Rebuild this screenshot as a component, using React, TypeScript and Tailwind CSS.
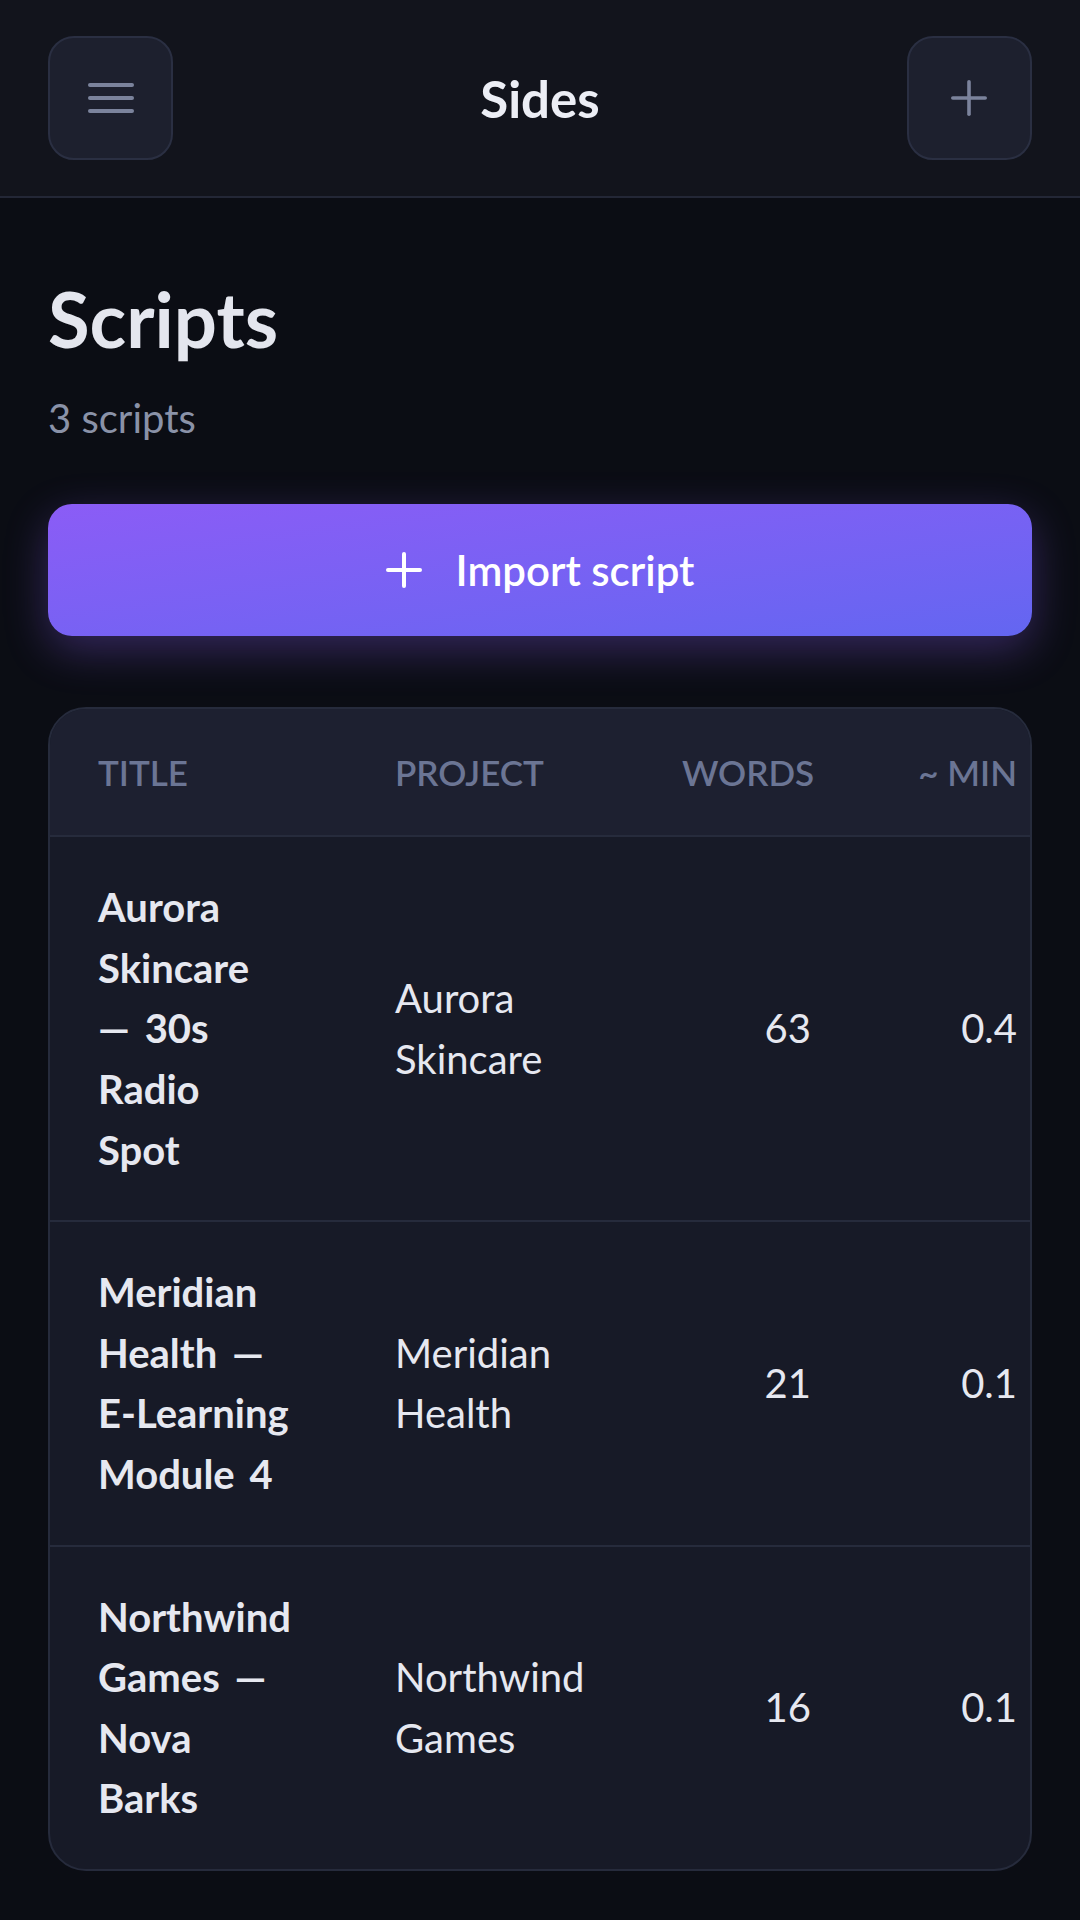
type Script = {
  id: string;
  title: string;
  project: string;
  words: number;
  minutes: number;
};

const scripts: Script[] = [
  { id: 'aurora', title: 'Aurora Skincare — 30s Radio Spot', project: 'Aurora Skincare', words: 63, minutes: 0.4 },
  { id: 'meridian', title: 'Meridian Health — E-Learning Module 4', project: 'Meridian Health', words: 21, minutes: 0.1 },
  { id: 'northwind', title: 'Northwind Games — Nova Barks', project: 'Northwind Games', words: 16, minutes: 0.1 },
];

function MenuGlyph() {
  return (
    <svg width="46" height="32" viewBox="0 0 46 32" fill="none" stroke="#7b839c" strokeWidth="4" strokeLinecap="round">
      <line x1="2" y1="3" x2="44" y2="3" />
      <line x1="2" y1="16" x2="44" y2="16" />
      <line x1="2" y1="29" x2="44" y2="29" />
    </svg>
  );
}

function PlusGlyph({ size, stroke, color }: { size: number; stroke: number; color: string }) {
  const h = stroke / 2;
  return (
    <svg width={size} height={size} viewBox={`0 0 ${size} ${size}`} fill="none" stroke={color} strokeWidth={stroke} strokeLinecap="round">
      <line x1={size / 2} y1={h} x2={size / 2} y2={size - h} />
      <line x1={h} y1={size / 2} x2={size - h} y2={size / 2} />
    </svg>
  );
}

export default function App() {
  return (
    <div className="min-h-screen w-full bg-[#0b0d14] font-['Lato',sans-serif] text-[#e6e8f0]">
      {/* Top bar */}
      <header className="flex items-center justify-between px-12 py-9 bg-[#12141c] border-b-2 border-[#232736]">
        <button className="flex items-center justify-center w-[125px] h-[124px] rounded-[26px] bg-[#1d202e] border-2 border-[#2a2f42]">
          <MenuGlyph />
        </button>
        <h1 className="text-[51px] font-bold leading-none text-[#eceef5]">Sides</h1>
        <button className="flex items-center justify-center w-[125px] h-[124px] rounded-[26px] bg-[#1d202e] border-2 border-[#2a2f42]">
          <PlusGlyph size={36} stroke={3.6} color="#7b839c" />
        </button>
      </header>

      <main className="px-12 pt-[75px] pb-12">
        <h2 className="text-[76px] font-bold leading-[1.2] text-[#e4e6ee]">Scripts</h2>
        <p className="mt-6 text-[40px] leading-[1.5] text-[#8a92a8]">3 scripts</p>

        <button className="mt-14 flex w-full h-[132px] items-center justify-center gap-[34px] rounded-[24px] bg-linear-to-br from-[#8b5cf6] to-[#6366f1] text-white shadow-[0_14px_44px_rgba(139,92,246,0.32)]">
          <PlusGlyph size={36} stroke={4} color="#ffffff" />
          <span className="text-[42px] font-semibold leading-none">Import script</span>
        </button>

        {/* Scripts table */}
        <div className="mt-[71px] overflow-hidden rounded-[38px] border-2 border-[#262b3c] bg-[#171a27]">
          <table className="table-fixed w-[1015px]">
            <colgroup>
              <col className="w-[297px]" />
              <col className="w-[287px]" />
              <col className="w-[225px]" />
              <col className="w-[206px]" />
            </colgroup>
            <thead className="bg-[#1d2030]">
              <tr className="border-b-2 border-[#262b3c] text-[35px] leading-[54px] uppercase text-[#6b7594]">
                <th className="pl-12 pr-[54px] py-9 text-left font-semibold">Title</th>
                <th className="px-12 py-9 text-left font-semibold">Project</th>
                <th className="px-12 py-9 text-right font-semibold">Words</th>
                <th className="px-12 py-9 text-right font-semibold">~ Min</th>
              </tr>
            </thead>
            <tbody>
              {scripts.map((s, i) => (
                <tr
                  key={s.id}
                  className={`text-[40px] leading-[60.6px] text-[#e6e8f0] ${i < scripts.length - 1 ? 'border-b-2 border-[#262b3c]' : ''}`}
                >
                  <td className="pl-12 pr-[54px] py-10 font-bold [word-spacing:5px]">{s.title}</td>
                  <td className="px-12 py-10">{s.project}</td>
                  <td className="px-12 py-10 text-right">{s.words}</td>
                  <td className="px-12 py-10 text-right">{s.minutes}</td>
                </tr>
              ))}
            </tbody>
          </table>
        </div>
      </main>
    </div>
  );
}
